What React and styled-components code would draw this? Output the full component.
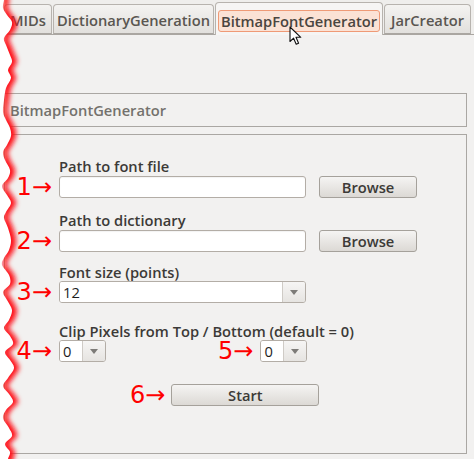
import React from 'react';
import styled, { createGlobalStyle } from 'styled-components';

const Global = createGlobalStyle`
  html, body { margin: 0; padding: 0; background: #f2f1f0; }
  body { font-family: "Open Sans", "DejaVu Sans", sans-serif; }
`;

const Page = styled.div`
  position: relative;
  width: 474px;
  height: 459px;
  overflow: hidden;
  background: #f2f1f0;
  font-family: "Open Sans", "DejaVu Sans", sans-serif;
  font-size: 14.7px;
`;

const TabBar = styled.div`
  display: flex;
  align-items: flex-end;
  gap: 1px;
  height: 35px;
  padding-left: 4px;
  box-sizing: border-box;
  background: #efeeec;
  border-bottom: 1px solid #aaa6a1;
`;

const Tab = styled.div`
  box-sizing: border-box;
  width: ${p => p.$w}px;
  height: ${p => (p.$active ? 33 : 30)}px;
  margin-bottom: ${p => (p.$active ? -1 : 0)}px;
  border: 1px solid #b7b3ae;
  border-bottom: ${p => (p.$active ? 'none' : '1px solid #aaa6a1')};
  border-radius: 4px 4px 0 0;
  background: ${p => (p.$active ? '#f6f5f4' : 'linear-gradient(#f4f3f1, #e2e0dd)')};
  display: flex;
  align-items: ${p => (p.$active ? 'stretch' : 'center')};
  justify-content: center;
  padding: ${p => (p.$active ? '7px 2px 3px 2px' : '2px 0 0 0')};
  font-weight: 600;
  color: #5a5651;
  white-space: nowrap;
`;

const FocusRing = styled.div`
  flex: 1;
  display: flex;
  align-items: center;
  justify-content: center;
  background: #fbe2d5;
  border: 1px solid #ef9a76;
  border-radius: 3px;
  color: #4a4540;
`;

const Content = styled.div`
  padding: 58px 7px 0 4px;
`;

const TitleBox = styled.div`
  box-sizing: border-box;
  height: 34px;
  border: 1px solid #aaa7a3;
  display: flex;
  align-items: center;
  padding-left: 5px;
  font-weight: 600;
  color: #74716d;
`;

const Panel = styled.div`
  box-sizing: border-box;
  margin-top: 7px;
  height: 320px;
  border: 1px solid #aaa7a3;
  padding-top: 23px;
`;

const Field = styled.div`
  display: grid;
  grid-template-columns: 47px 1fr;
  column-gap: 7px;
  margin-top: ${p => p.$top || 0}px;
`;

const Label = styled.div`
  grid-column: 2;
  height: 16px;
  line-height: 16px;
  margin-bottom: ${p => p.$gap}px;
  font-weight: 600;
  color: #3c3a37;
  white-space: nowrap;
`;

const Marker = styled.span`
  justify-self: end;
  align-self: center;
  display: inline-flex;
  align-items: center;
  height: 22px;
  color: #ff0000;
  font-family: "DejaVu Sans", sans-serif;
  font-size: 24px;
  line-height: 22px;
  white-space: nowrap;
  margin-left: ${p => p.$ml || 0}px;
  margin-right: ${p => p.$mr || 0}px;
`;

const Controls = styled.div`
  grid-column: 2;
  display: flex;
  align-items: center;
  padding-left: ${p => p.$pl || 0}px;
`;

const TextInput = styled.div`
  box-sizing: border-box;
  width: 247px;
  height: 22px;
  background: #ffffff;
  border: 1px solid #b3ada6;
  border-radius: 3px;
  box-shadow: inset 0 1px 1px rgba(0, 0, 0, 0.05);
`;

const Button = styled.div`
  box-sizing: border-box;
  width: ${p => p.$w}px;
  height: 22px;
  margin-left: ${p => p.$ml || 0}px;
  border: 1px solid #a5a19b;
  border-radius: 3px;
  background: linear-gradient(#f5f4f3, #dcd9d5);
  display: flex;
  align-items: center;
  justify-content: center;
  font-weight: 600;
  color: #3c3a37;
`;

const Combo = styled.div`
  box-sizing: border-box;
  width: ${p => p.$w}px;
  height: 22px;
  display: flex;
  border: 1px solid #b3ada6;
  border-radius: 3px;
  overflow: hidden;
`;

const ComboValue = styled.div`
  flex: 1;
  background: #ffffff;
  padding-left: 3px;
  line-height: 20px;
  color: #1e1e1e;
  font-weight: 500;
`;

const ComboButton = styled.div`
  width: 22px;
  border-left: 1px solid #cfcbc6;
  background: linear-gradient(#f6f5f4, #e6e4e1);
  display: flex;
  align-items: center;
  justify-content: center;
  &::after {
    content: '';
    border-top: 5px solid #7d7b78;
    border-left: 4px solid transparent;
    border-right: 4px solid transparent;
  }
`;

const EdgeArt = styled.svg`
  position: absolute;
  left: 0;
  top: 0;
  pointer-events: none;
`;

const Cursor = styled.svg`
  position: absolute;
  left: 289px;
  top: 26px;
  pointer-events: none;
`;

const edgePts = [
  [4, -4], [4, 0], [3, 8], [7, 15], [12, 22], [10, 30], [4, 38], [6, 45], [10, 55], [12, 62],
  [8, 70], [11, 78], [6, 88], [4, 100], [3, 112], [6, 120], [10, 128], [11, 136], [7, 145],
  [3, 152], [5, 160], [10, 170], [8, 178], [2, 186], [7, 195], [11, 203], [6, 212], [4, 218],
  [8, 228], [11, 240], [9, 250], [4, 258], [2, 265], [9, 275], [10, 284], [3, 292], [7, 300],
  [12, 310], [9, 320], [4, 328], [10, 336], [13, 344], [5, 352], [10, 360], [14, 368], [8, 378],
  [3, 386], [9, 394], [13, 402], [6, 410], [3, 418], [9, 428], [12, 436], [5, 444], [10, 452],
  [8, 459], [8, 464],
];

function curve(pts) {
  let d = `M${pts[0][0]} ${pts[0][1]}`;
  for (let i = 0; i < pts.length - 1; i++) {
    const p0 = pts[i - 1] || pts[i];
    const p1 = pts[i];
    const p2 = pts[i + 1];
    const p3 = pts[i + 2] || p2;
    const c1x = p1[0] + (p2[0] - p0[0]) / 6;
    const c1y = p1[1] + (p2[1] - p0[1]) / 6;
    const c2x = p2[0] - (p3[0] - p1[0]) / 6;
    const c2y = p2[1] - (p3[1] - p1[1]) / 6;
    d += ` C${c1x.toFixed(2)} ${c1y.toFixed(2)} ${c2x.toFixed(2)} ${c2y.toFixed(2)} ${p2[0]} ${p2[1]}`;
  }
  return d;
}

const edgeCurve = curve(edgePts);
const edgeFill = `${edgeCurve} L-2 464 L-2 -4 Z`;

function TornEdge() {
  return (
    <EdgeArt width="30" height="459" viewBox="0 0 30 459">
      <defs>
        <filter id="soft" x="-50%" y="-5%" width="200%" height="110%">
          <feGaussianBlur stdDeviation="2.6" />
        </filter>
      </defs>
      <path d={edgeFill} fill="#ff0a12" transform="translate(5 0)" filter="url(#soft)" />
      <path d={edgeFill} fill="#ffffff" />
    </EdgeArt>
  );
}

function SmallCombo({ value, w }) {
  return (
    <Combo $w={w}>
      <ComboValue>{value}</ComboValue>
      <ComboButton />
    </Combo>
  );
}

export default function App() {
  return (
    <Page>
      <Global />
      <TabBar>
        <Tab $w={48}>MIDs</Tab>
        <Tab $w={161}>DictionaryGeneration</Tab>
        <Tab $w={168} $active>
          <FocusRing>BitmapFontGenerator</FocusRing>
        </Tab>
        <Tab $w={87}>JarCreator</Tab>
      </TabBar>
      <Content>
        <TitleBox>BitmapFontGenerator</TitleBox>
        <Panel>
          <Field>
            <Label $gap={2}>Path to font file</Label>
            <Marker>1→</Marker>
            <Controls>
              <TextInput />
              <Button $w={98} $ml={13}>Browse</Button>
            </Controls>
          </Field>
          <Field $top={14}>
            <Label $gap={2}>Path to dictionary</Label>
            <Marker>2→</Marker>
            <Controls>
              <TextInput />
              <Button $w={98} $ml={13}>Browse</Button>
            </Controls>
          </Field>
          <Field $top={12}>
            <Label $gap={1}>Font size (points)</Label>
            <Marker>3→</Marker>
            <Controls>
              <SmallCombo value="12" w={247} />
            </Controls>
          </Field>
          <Field $top={20}>
            <Label $gap={1}>Clip Pixels from Top / Bottom (default = 0)</Label>
            <Marker>4→</Marker>
            <Controls>
              <SmallCombo value="0" w={47} />
              <Marker $ml={112} $mr={7}>5→</Marker>
              <SmallCombo value="0" w={47} />
            </Controls>
          </Field>
          <Field $top={22}>
            <Controls $pl={71}>
              <Marker $mr={6}>6→</Marker>
              <Button $w={148}>Start</Button>
            </Controls>
          </Field>
        </Panel>
      </Content>
      <TornEdge />
      <Cursor width="14" height="20" viewBox="0 0 14 20">
        <path
          d="M1 1 L1 15.5 L4.6 12.2 L7.2 18.2 L9.6 17.2 L7 11.3 L11.8 11.3 Z"
          fill="#ffffff"
          stroke="#111111"
          strokeWidth="1.1"
          strokeLinejoin="round"
        />
      </Cursor>
    </Page>
  );
}
